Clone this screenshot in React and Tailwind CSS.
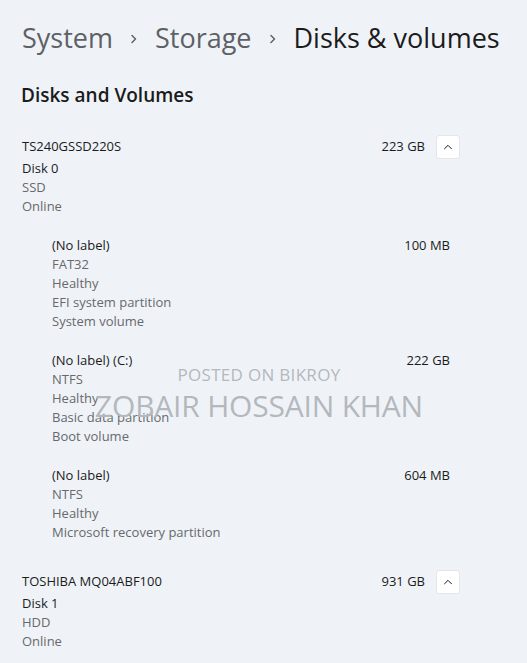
import React from 'react';

const disks = [
    {
        name: 'TS240GSSD220S',
        size: '223 GB',
        lines: ['Disk 0', 'SSD', 'Online'],
        partitions: [
            { label: '(No label)', size: '100 MB', lines: ['FAT32', 'Healthy', 'EFI system partition', 'System volume'] },
            { label: '(No label) (C:)', size: '222 GB', lines: ['NTFS', 'Healthy', 'Basic data partition', 'Boot volume'] },
            { label: '(No label)', size: '604 MB', lines: ['NTFS', 'Healthy', 'Microsoft recovery partition'] },
        ],
    },
    {
        name: 'TOSHIBA MQ04ABF100',
        size: '931 GB',
        lines: ['Disk 1', 'HDD', 'Online'],
        partitions: [],
    },
];

function Chevron() {
    return (
        <svg width="10" height="10" viewBox="0 0 10 10" fill="none">
            <path d="M1.5 6.8 5 3.3l3.5 3.5" stroke="#1b1b1b" strokeWidth="1" strokeLinecap="round" strokeLinejoin="round" />
        </svg>
    );
}

function Crumb() {
    return (
        <svg width="10" height="12" viewBox="0 0 10 12" fill="none" className="mx-[16px] mt-[2px]">
            <path d="M3 2.5 6.5 6 3 9.5" stroke="#5f6368" strokeWidth="1.5" strokeLinecap="round" strokeLinejoin="round" />
        </svg>
    );
}

export default function App() {
    return (
        <div className="relative min-h-[663px] overflow-hidden bg-[#eff3f8] pl-[22px] pt-[20px] font-['Open_Sans','Noto_Sans',sans-serif] text-[#1b1b1b]">
            <div className="flex items-center text-[27px] font-medium leading-[36px]">
                <span className="text-[#5d6166]">System</span>
                <Crumb />
                <span className="text-[#5d6166]">Storage</span>
                <Crumb />
                <span className="text-[#1b1b1b]">Disks &amp; volumes</span>
            </div>

            <h2 className="mt-[27px] -ml-[1px] text-[19px] font-semibold leading-[24px]">Disks and Volumes</h2>

            {disks.map((disk) => (
                <div key={disk.name} className="mt-[28px]">
                    <div className="flex h-[24px] w-[438px] items-center text-[13px]">
                        <span className="flex-1">{disk.name}</span>
                        <span className="mr-[11px]">{disk.size}</span>
                        <button className="flex h-[24px] w-[24px] items-center justify-center rounded-[3px] border border-[#e3e6ea] bg-white">
                            <Chevron />
                        </button>
                    </div>
                    <div className="text-[13px] leading-[19px]">
                        {disk.lines.map((l, j) => (
                            <div key={l} className={j === 0 ? 'text-[#1b1b1b]' : 'text-[#67696c]'}>{l}</div>
                        ))}
                    </div>
                    {disk.partitions.map((p) => (
                        <div key={p.size} className="mt-[20px] w-[428px] pl-[30px] text-[13px] leading-[19px]">
                            <div className="flex">
                                <span className="flex-1">{p.label}</span>
                                <span>{p.size}</span>
                            </div>
                            {p.lines.map((l) => (
                                <div key={l} className="text-[#67696c]">{l}</div>
                            ))}
                        </div>
                    ))}
                </div>
            ))}

            <div className="pointer-events-none absolute left-[90px] top-[363px] w-[338px] text-center font-['Open_Sans',sans-serif] text-[#b4b8bd]">
                <div className="text-[17px] leading-[23px] tracking-[0.3px]">POSTED ON BIKROY</div>
                <div className="text-[30px] leading-[40px] tracking-[-0.2px]">ZOBAIR HOSSAIN KHAN</div>
            </div>
        </div>
    );
}
